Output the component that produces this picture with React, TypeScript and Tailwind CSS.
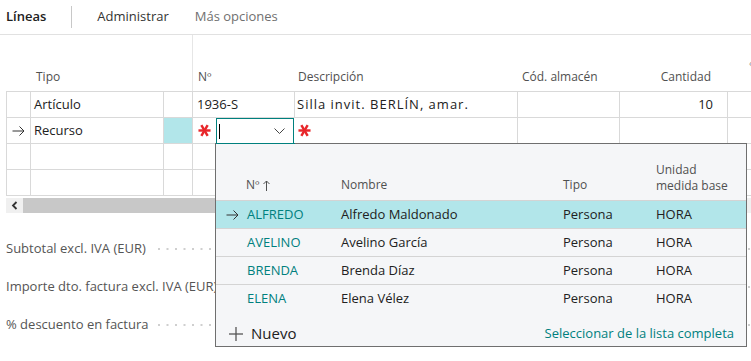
import React from "react";

const Asterisk = () => (
  <svg width="13" height="13" viewBox="0 0 14 14" className="shrink-0">
    <g stroke="#e8262a" strokeWidth="2.6" strokeLinecap="butt">
      <line x1="0.5" y1="7" x2="13.5" y2="7" />
      <line x1="3.6" y1="1.2" x2="10.4" y2="12.8" />
      <line x1="10.4" y1="1.2" x2="3.6" y2="12.8" />
    </g>
  </svg>
);

const Arrow = () => (
  <svg width="13" height="10" viewBox="0 0 13 10" className="shrink-0">
    <g stroke="#333" strokeWidth="1" fill="none">
      <line x1="0.5" y1="5" x2="12" y2="5" />
      <polyline points="7.5,0.5 12,5 7.5,9.5" />
    </g>
  </svg>
);

const Dots = ({ width }: { width: number }) => (
  <svg width={width} height="2" viewBox={`0 0 ${width} 2`} className="shrink-0">
    <line x1="1" y1="1" x2={width} y2="1" stroke="#cfcfcf" strokeWidth="2" strokeDasharray="2 6.5" />
  </svg>
);

const cols = [24, 133, 29, 102, 223, 102, 108, 30];

function Row({ cells }: { cells: React.ReactNode[] }) {
  return (
    <div className="flex h-[26px] border-b border-[#d9d9d9]">
      {cols.map((w, i) => (
        <div
          key={i}
          style={{ width: w }}
          className="shrink-0 h-full border-l border-[#d9d9d9] flex items-center"
        >
          {cells[i]}
        </div>
      ))}
    </div>
  );
}

const people = [
  ["ALFREDO", "Alfredo Maldonado"],
  ["AVELINO", "Avelino García"],
  ["BRENDA", "Brenda Díaz"],
  ["ELENA", "Elena Vélez"],
];

export default function App() {
  return (
    <div
      className="relative w-[751px] h-[361px] overflow-hidden bg-white text-[13px] text-[#212121]"
      style={{ fontFamily: "'Open Sans', 'Noto Sans', sans-serif" }}
    >
      {/* nav */}
      <div className="h-[35px] flex items-center border-b border-[#e1e1e1]">
        <span className="ml-[6px] font-semibold text-[#212121]">Líneas</span>
        <div className="ml-[25px] w-px h-[22px] bg-[#c8c8c8]" />
        <span className="ml-[25px] text-[#333]">Administrar</span>
        <span className="ml-[26px] text-[#707070]">Más opciones</span>
      </div>

      {/* headers */}
      <div className="flex h-[56px] pl-[6px] text-[12px] text-[#505050]">
        <div className="w-[157px] shrink-0 flex items-end pb-[5px] pl-[30px]">Tipo</div>
        <div className="w-[29px] shrink-0" />
        <div className="w-[102px] shrink-0 flex items-end pb-[5px] pl-[5px] border-l border-[#e6e6e6]">Nº</div>
        <div className="w-[223px] shrink-0 flex items-end pb-[5px] pl-[4px]">Descripción</div>
        <div className="w-[102px] shrink-0 flex items-end pb-[5px] pl-[5px]">Cód. almacén</div>
        <div className="w-[108px] shrink-0 flex items-end justify-end pb-[5px] pr-[16px]">Cantidad</div>
        <div className="flex-1 relative">
          <span className="absolute left-[22px] top-[21px] text-[#999] text-[10px]">‹</span>
        </div>
      </div>

      {/* table */}
      <div className="ml-[6px] border-t border-[#d9d9d9]">
        <Row
          cells={[
            null,
            <span className="pl-[3px]">Artículo</span>,
            null,
            <span className="pl-[4px]">1936-S</span>,
            <span className="pl-[2px] whitespace-nowrap tracking-[1px]">Silla invit. BERLÍN, amar.</span>,
            null,
            <span className="w-full text-right pr-[14px]">10</span>,
            null,
          ]}
        />
        <div className="flex h-[26px] border-b border-[#d9d9d9]">
          <div className="w-[24px] shrink-0 border-l border-[#d9d9d9] flex items-center justify-center">
            <Arrow />
          </div>
          <div className="w-[133px] shrink-0 border-l border-[#d9d9d9] flex items-center pl-[3px]">Recurso</div>
          <div className="w-[29px] shrink-0 border-l border-[#d9d9d9] bg-[#b2e6ea]" />
          <div className="w-[102px] shrink-0 border-l border-[#d9d9d9] flex items-center">
            <div className="w-[23px] flex justify-center pr-[1px]">
              <Asterisk />
            </div>
            <div className="flex-1 h-[26px] -mb-px border border-[#00807e] bg-white flex items-center pl-[2px] pr-[8px]">
              <div className="w-px h-[15px] bg-black" />
              <div className="flex-1" />
              <svg width="11" height="6" viewBox="0 0 11 6">
                <polyline points="0.5,0.5 5.5,5.5 10.5,0.5" stroke="#444" fill="none" strokeWidth="1" />
              </svg>
            </div>
          </div>
          <div className="w-[223px] shrink-0 flex items-center pl-[4px]">
            <Asterisk />
          </div>
          <div className="w-[102px] shrink-0 border-l border-[#d9d9d9]" />
          <div className="w-[108px] shrink-0 border-l border-[#d9d9d9]" />
          <div className="w-[30px] shrink-0 border-l border-[#d9d9d9]" />
        </div>
        <Row cells={[]} />
        <Row cells={[]} />
      </div>

      {/* scrollbar */}
      <div className="mt-[2px] ml-[6px] h-[15px] flex bg-[#f0f0f0]">
        <div className="w-[17px] flex items-center justify-center">
          <svg width="7" height="9" viewBox="0 0 7 9">
            <polyline points="5.5,1 2,4.5 5.5,8" stroke="#333" strokeWidth="1.8" fill="none" />
          </svg>
        </div>
        <div className="w-[560px] bg-[#c8c8c8]" />
      </div>

      {/* totals */}
      <div className="mt-[26px] flex flex-col gap-[18px] text-[#555]">
        {["Subtotal excl. IVA (EUR)", "Importe dto. factura excl. IVA (EUR)", "% descuento en factura"].map(
          (t, i) => (
            <div key={i} className="flex items-center h-[20px] pl-[6px]">
              <span className="w-[151px] shrink-0 whitespace-nowrap">{t}</span>
              {i !== 1 && <Dots width={60} />}
              <div className="ml-auto mr-[-4px]">
                <Dots width={8} />
              </div>
            </div>
          )
        )}
      </div>

      {/* popup */}
      <div className="absolute left-[215px] top-[143px] w-[532px] h-[204px] border border-[#6f6f6f] bg-[#f5f6f8] flex flex-col">
        <div className="absolute left-0 top-[-1px] w-[79px] h-px bg-[#00807e]" />
        <div className="h-[57px] shrink-0 flex items-end border-b border-[#d4d4d4] text-[12px] text-[#505050] pb-[6px]">
          <div className="w-[125px] pl-[30px] flex items-center gap-[3px]">
            Nº
            <svg width="7" height="11" viewBox="0 0 7 11">
              <g stroke="#505050" fill="none" strokeWidth="1">
                <line x1="3.5" y1="1" x2="3.5" y2="11" />
                <polyline points="0.5,4 3.5,1 6.5,4" />
              </g>
            </svg>
          </div>
          <div className="w-[222px]">Nombre</div>
          <div className="w-[93px]">Tipo</div>
          <div className="leading-[16px]">
            Unidad
            <br />
            medida base
          </div>
        </div>
        {people.map(([code, name], i) => (
          <div
            key={code}
            className={
              "h-[28px] flex items-center shrink-0 " +
              (i === 0 ? "bg-[#b2e6ea] " : "") +
              (i < 3 ? "border-b border-[#d4d4d4]" : "")
            }
          >
            <div className="w-[31px] flex justify-center pl-[2px]">{i === 0 && <Arrow />}</div>
            <div className="w-[94px] text-[#00807e]">{code}</div>
            <div className="w-[222px]">{name}</div>
            <div className="w-[93px]">Persona</div>
            <div>HORA</div>
          </div>
        ))}
        <div className="flex-1 flex items-center pl-[13px] pr-[12px] pt-[8px]">
          <svg width="14" height="14" viewBox="0 0 14 14">
            <g stroke="#555" strokeWidth="1.3">
              <line x1="7" y1="0" x2="7" y2="14" />
              <line x1="0" y1="7" x2="14" y2="7" />
            </g>
          </svg>
          <span className="ml-[8px] text-[15px] text-[#212121]">Nuevo</span>
          <span className="ml-auto text-[#00807e]">Seleccionar de la lista completa</span>
        </div>
      </div>
    </div>
  );
}
